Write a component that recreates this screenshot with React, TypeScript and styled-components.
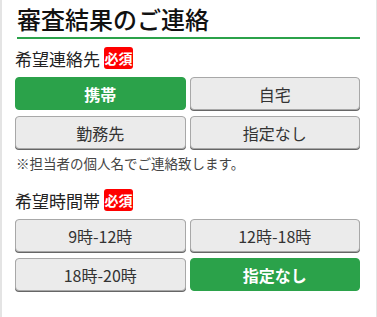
import React, { useState } from "react";
import styled, { createGlobalStyle } from "styled-components";

const Global = createGlobalStyle`
  html, body { margin: 0; padding: 0; background: #fff; }
  body { font-family: "Noto Sans CJK JP", "Noto Sans", sans-serif; }
  * { box-sizing: border-box; }
`;

const Page = styled.div`
  width: 377px;
  min-height: 317px;
  border-left: 2px solid #e4e4e4;
  border-right: 1px solid #e4e4e4;
  padding: 4px 16px 0 13px;
`;

const Title = styled.h2`
  margin: 0 0 0 2px;
  font-size: 24px;
  line-height: 30px;
  font-weight: 500;
  color: #111;
  padding-bottom: 3px;
  border-bottom: 2px solid #2ba24a;
`;

const Label = styled.div<{ $top: number }>`
  display: flex;
  align-items: center;
  gap: 4px;
  height: 22px;
  margin-top: ${(p) => p.$top}px;
  font-size: 17px;
  color: #222;
`;

const Badge = styled.span`
  display: inline-flex;
  align-items: center;
  justify-content: center;
  width: 29px;
  height: 22px;
  background: #f00;
  color: #fff;
  font-size: 14px;
  font-weight: 700;
  border-radius: 3px;
`;

const Grid = styled.div`
  display: grid;
  grid-template-columns: 1fr 1fr;
  column-gap: 4px;
  row-gap: 6px;
  margin-top: 8px;
`;

const Choice = styled.button<{ $on: boolean }>`
  height: 33px;
  font-family: inherit;
  font-size: 16px;
  border-radius: 4px;
  cursor: pointer;
  padding: 0;
  background: ${(p) => (p.$on ? "#2ba24a" : "#ebebeb")};
  color: ${(p) => (p.$on ? "#fff" : "#333")};
  font-weight: ${(p) => (p.$on ? 700 : 400)};
  border: 1px solid ${(p) => (p.$on ? "#2ba24a" : "#a8a8a8")};
  box-shadow: ${(p) => (p.$on ? "none" : "0 1px 0 #666")};
`;

const Note = styled.p`
  margin: 3px 0 0 1px;
  font-size: 13.5px;
  line-height: 22px;
  color: #444;
`;

export default function App() {
  const [contact, setContact] = useState("携帯");
  const [time, setTime] = useState("指定なし");
  const contacts = ["携帯", "自宅", "勤務先", "指定なし"];
  const times = ["9時-12時", "12時-18時", "18時-20時", "指定なし"];
  return (
    <>
      <Global />
      <Page>
        <Title>審査結果のご連絡</Title>
        <Label $top={8}>
          希望連絡先<Badge>必須</Badge>
        </Label>
        <Grid>
          {contacts.map((c) => (
            <Choice key={c} $on={contact === c} onClick={() => setContact(c)}>
              {c}
            </Choice>
          ))}
        </Grid>
        <Note>※担当者の個人名でご連絡致します。</Note>
        <Label $top={15}>
          希望時間帯<Badge>必須</Badge>
        </Label>
        <Grid>
          {times.map((t) => (
            <Choice key={t} $on={time === t} onClick={() => setTime(t)}>
              {t}
            </Choice>
          ))}
        </Grid>
      </Page>
    </>
  );
}
